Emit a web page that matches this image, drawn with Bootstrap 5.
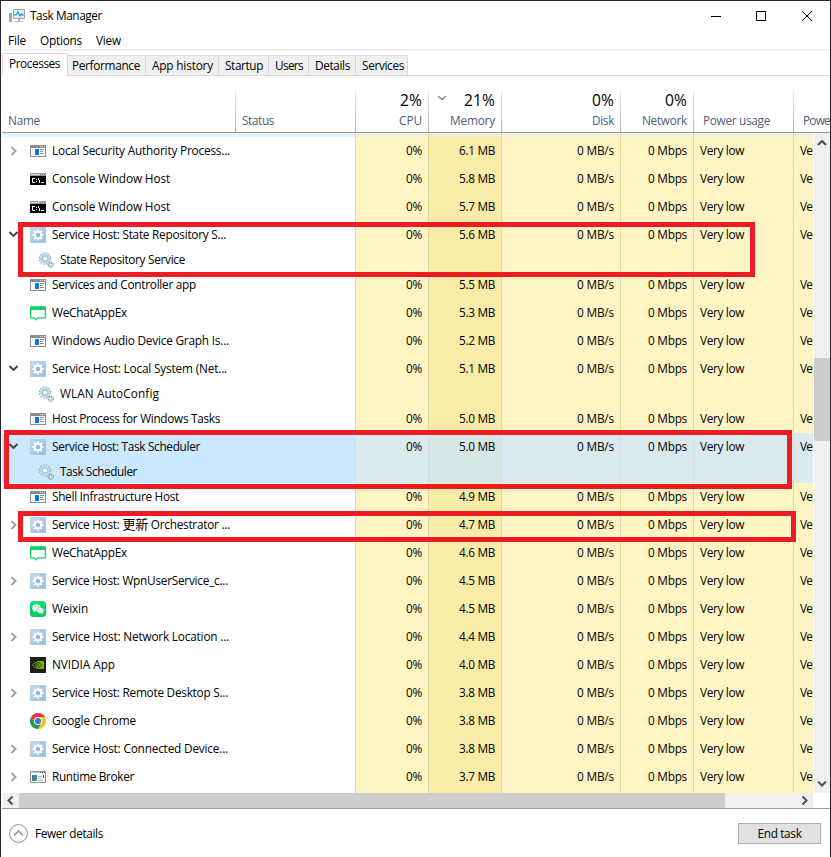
<!DOCTYPE html>
<html lang="en">
<head>
<meta charset="utf-8">
<title>Task Manager</title>
<link rel="stylesheet" href="https://cdn.jsdelivr.net/npm/bootstrap@5.3.0/dist/css/bootstrap.min.css">
<style>
html, body { height: 857px; overflow: hidden; }
body { font: 11.8px/16px "Open Sans", "Noto Sans", "Noto Sans CJK SC", sans-serif; color: #000; background: #fff; }
svg { display: block; flex: none; }
.win { width: 831px; height: 857px; border: 1px solid #2b282e; border-bottom: 0; padding-left: 1px; white-space: nowrap; }
.titlebar { height: 29px; }
.titlebar .caption { padding-left: 7px; }
.menus { height: 19px; padding: 1px 0 0 6px; }
.menus span { margin-right: 14px; }
.rule { height: 2px; background: #f0f0f0; }
.tabs { height: 25px; padding-top: 2px; }
.tab-item { height: 21px; border: 1px solid #d9d9d9; border-left: 0; background: #f0f0f0; padding: 1px 0 0 6px; }
.tab-item.snug { padding-left: 4px; }
.tab-item.tab-on { height: 23px; background: #fff; border-left: 1px solid #d9d9d9; border-bottom: 0; padding: 1px 0 0 6px; width: 66px; }
.tab-rest { height: 1px; background: #d9d9d9; }
.heads { height: 57px; padding-top: 15px; border-bottom: 1px solid #999; color: #4c607a; }
.hd { height: 41px; flex: none; border-left: 1px solid; border-image: linear-gradient(#e8e8e8, #b4b4b4) 1; position: relative; padding: 1px 0 0 6px; }
.hd.num { text-align: right; padding: 1px 6px 0 0; }
.hd.wide { padding-left: 9px; }
.hd-first { border: 0; }
.pct { font-size: 15.6px; line-height: 16px; height: 20px; color: #000; }
.sortmark { position: absolute; left: 8px; top: 4px; }
.listing { height: 660px; }
.sheet { width: 811px; height: 660px; overflow: hidden; }
.grp { display: grid; grid-template-columns: 353px 73px 73px 119px 73px 100px 20px; height: 28px; }
.grp.has-kid { height: 50px; }
.grp.peek { height: 4px; }
.grp.tail { height: 2px; }
.val { background: #fff4c4; border-left: 1px solid #e9d7a1; text-align: right; padding: 5px 6px 0 0; }
.val.mem { background: #f9eca8; }
.val.txt { text-align: left; padding-left: 6px; padding-right: 0; }
.peek .nm { background: #e5f3ff; }
.peek .val, .tail .val { padding: 0; }
.peek .val { background: #edf2df; }
.peek .mem { background: #eaefd4; }
.sel .nm { background: #cce8ff; }
.sel .val { background: #d9ebee; border-color: #d2e2e4; }
.sel .mem { background: #d6e8e6; }
.main-line { height: 28px; }
.kid-line { height: 22px; padding-left: 36px; gap: 6px; }
.main-line > [data-w], .kid-line > [data-w], .caption > [data-w], .foot > [data-w] { margin-bottom: 2px; }
.twist { width: 28px; padding-left: 5px; }
.icn { width: 22px; }
.vbar { width: 16px; background: #f0f0f0; margin-left: 1px; padding: 6px 0 5px; }
.vgap { height: 211px; }
.vthumb { height: 83px; background: #cdcdcd; }
.hbar { height: 15px; width: 811px; background: #f0f0f0; }
.hthumb { width: 706px; background: #cdcdcd; }
.foot { height: 50px; border-top: 1px solid #999; padding: 0 9px 0 7px; }
.foot .more { margin-left: 7px; }
.endbtn { width: 83px; height: 21px; border: 1px solid #adadad; border-radius: 0; background: #e1e1e1; font-size: inherit; line-height: 19px; color: #000; padding: 0; }
.redbox { position: absolute; border: 5px solid #ed1c24; }
.box-a { left: 18px; top: 222px; width: 737px; height: 55px; }
.box-b { left: 4px; top: 430px; width: 788px; height: 59px; }
.box-c { left: 18px; top: 511px; width: 778px; height: 31px; }
.cjk { font-size: 13px; line-height: 1; }
[data-w] { display: inline-block; }
</style>
<script src="https://cdn.jsdelivr.net/npm/bootstrap@5.3.0/dist/js/bootstrap.bundle.min.js"></script>
</head>
<body class="position-relative">
<svg width="0" height="0" class="position-absolute">
  <defs>
    <linearGradient id="gBlue" x1="0" y1="0" x2="1" y2="1"><stop offset="0" stop-color="#c3ddf3"/><stop offset="1" stop-color="#8fb9e0"/></linearGradient>
    <linearGradient id="gGreen" x1="0" y1="0" x2="0" y2="1"><stop offset="0" stop-color="#08e36a"/><stop offset="1" stop-color="#06c75a"/></linearGradient>
    <linearGradient id="gRt" x1="0" y1="0" x2="1" y2="1"><stop offset="0" stop-color="#2f6fb8"/><stop offset="1" stop-color="#4ba36a"/></linearGradient>
    <symbol id="i-app" viewBox="0 0 16 16"><path fill="#888d92" d="M0 2h16v12H0z"/><path fill="#fff" d="M1 5h14v8H1z"/><path fill="#dfe3e6" d="M10 3h1v1h-1zM12 3h1v1h-1zM14 3h1v1h-1z"/><path fill="#0a77d5" d="M5 6h4v6H5z"/><path fill="#8a8f94" d="M10 6h4v1h-4zM10 8h3v1h-3zM10 10h4v1h-4z"/><path fill="#f0f1f2" d="M2 6h2v6H2z"/></symbol>
    <symbol id="i-con" viewBox="0 0 16 16"><path fill="#9ba0a5" d="M0 2h16v12H0z"/><path fill="#d5dadd" d="M1 3h14v1H1z"/><path fill="#666" d="M10 3h1v1h-1zM12 3h1v1h-1zM14 3h1v1h-1z"/><path d="M0 5h16v9H0z"/><path fill="#fff" d="M2 7h3v1H3v3h2v1H2.500L2 11zM6 8h1v1H6zM6 10h1v1H6zM8 7h1v2H8zM9 9h1v3H9zM11 11h3v1h-3z"/></symbol>
    <symbol id="i-svc" viewBox="0 0 16 16"><path fill="url(#gBlue)" stroke="#9cbfdd" stroke-width=".6" d="M.3.3h15.400v15.400H.3z"/><g stroke="#fff" stroke-width="2.100"><path d="M8 2.500v11M2.500 8h11M4.100 4.100l7.800 7.800M11.900 4.100l-7.800 7.800"/></g><circle cx="8" cy="8" r="4.200" fill="#fff"/><circle cx="8" cy="8" r="2.200" fill="#8fb8e0"/></symbol>
    <symbol id="i-gear" viewBox="0 0 16 16"><circle cx="7" cy="6.500" r="5.700" fill="none" stroke="#9cb5c5" stroke-width="1.300" stroke-dasharray="1.700 1.280"/><circle cx="7" cy="6.500" r="4" fill="#fff" stroke="#b9d6e8" stroke-width="2.200"/><circle cx="7" cy="6.500" r="2.600" fill="#fff" stroke="#7d9eb4" stroke-width=".8"/><circle cx="12.700" cy="12.700" r="2.600" fill="none" stroke="#7c929f" stroke-width="1.200" stroke-dasharray="1.100 .94"/><circle cx="12.700" cy="12.700" r="1.500" fill="#fff" stroke="#8fb0c4"/></symbol>
    <symbol id="i-wcx" viewBox="0 0 16 16"><path fill="#fff" stroke="#0bd868" stroke-width="1.300" d="M.7 2.200h14.600v10.600H8L6 14.700l-1.500-1.900H.7z"/><path fill="#0bd868" d="M0 1.500h16V5H0z"/><path fill="#08a850" d="M10 3h1v1h-1zM12 3h1v1h-1zM14 3h1v1h-1z"/></symbol>
    <symbol id="i-wx" viewBox="0 0 16 16"><rect width="16" height="16" rx="3.500" fill="url(#gGreen)"/><ellipse cx="6.500" cy="6.700" rx="4.200" ry="3.500" fill="#fff"/><path fill="#fff" d="M3.500 9v2.300L6 10z"/><ellipse cx="10.300" cy="9.500" rx="3.600" ry="3" fill="#fff" stroke="#08d662" stroke-width=".6"/><path fill="#fff" d="M11 12l2 1v-2z"/><g fill="#08d662"><circle cx="5.100" cy="5.700" r=".6"/><circle cx="8" cy="5.700" r=".6"/><circle cx="9.200" cy="8.700" r=".5"/><circle cx="11.600" cy="8.700" r=".5"/></g></symbol>
    <symbol id="i-nv" viewBox="0 0 16 16"><path fill="#201f20" d="M0 0h16v16H0z"/><path fill="#76b900" d="M7 4h7v8H7z"/><path fill="none" stroke="#76b900" stroke-width="1" d="M7 5.300C4.500 5.300 2.500 8 2.500 8S4.400 11.200 7.500 11.200M7.300 7c-1.300 0-2 1-2 1s.8 1.600 2.500 1.600"/><path fill="none" stroke="#201f20" stroke-width=".9" d="M7 5.300c2.800 0 4.500 2.600 4.500 2.600S9.800 11 7.500 11M7 7c1.500 0 2.200 1 2.200 1S8.500 9.300 7.500 9.500"/></symbol>
    <symbol id="i-chr" viewBox="0 0 16 16"><path fill="#e33b2e" d="M8 8L1.070 4A8 8 0 0 1 14.930 4z"/><path fill="#fbc116" d="M8 8V4h6.930A8 8 0 0 1 8 16l3.460-6z"/><path fill="#279847" d="M8 16A8 8 0 0 1 1.070 4l3.470 6L8 12l3.460-2z"/><path fill="#e33b2e" d="M1.070 4L4.540 10 8 8V4z"/><circle cx="8" cy="8" r="4" fill="#fff"/><circle cx="8" cy="8" r="3.100" fill="#2b7de9"/></symbol>
    <symbol id="i-rt" viewBox="0 0 16 16"><path fill="#fff" stroke="#8c9297" d="M.5 2.500h15v11H.5z"/><path fill="#b9d0e0" d="M1 3h14v1H1z"/><path fill="#56616a" d="M10 3h1v1h-1zM12 3h1v1h-1zM14 3h1v1h-1zM13 6h1v3h-1z"/><path fill="url(#gRt)" d="M2 6h5v6H2z"/><path fill="#b5b8bb" d="M8 7h4v1H8zM8 9h4v1H8zM8 11h5v1H8z"/></symbol>
    <symbol id="c-right" viewBox="0 0 12 12"><path fill="none" stroke="#a0a0a0" stroke-width="1.900" d="M4.500 2l4 4-4 4"/></symbol>
    <symbol id="c-down" viewBox="0 0 12 12"><path fill="none" stroke="#404040" stroke-width="1.900" d="M2.500 3l4 4 4-4"/></symbol>
  </defs>
</svg>
<main class="win">
  <header class="titlebar d-flex align-items-center">
    <div class="caption d-flex align-items-center flex-grow-1">
      <svg width="17" height="16" viewBox="0 0 17 16" class="me-1"><path fill="#a5a9ad" d="M0 5h3v9H0z"/><path fill="#32b54a" d="M1 6h1v1H1z"/><path fill="#d6eefb" stroke="#9b9fa3" d="M4.500 1.500h11v9h-11z"/><path fill="none" stroke="#1b86bd" stroke-width="1.100" d="M5 7h2l2-3 2 4 1.500-2 1 1H15"/><path fill="#b6babd" d="M9 11h2v2h3v1H6v-1h3z"/></svg>
      <span data-w="72">Task Manager</span>
    </div>
    <svg width="119" height="12" viewBox="0 0 119 12" fill="none" stroke="#000"><path d="M0 6.500h10M45.500 1.500h9v9h-9zM91 1l10 10M101 1l-10 10"/></svg>
  </header>
  <nav class="menus d-flex align-items-center"><span data-w="18">File</span><span data-w="42">Options</span><span data-w="25">View</span></nav>
  <div class="rule"></div>
  <div class="tabs d-flex align-items-end">
    <div class="tab-item tab-on"><span data-w="51">Processes</span></div>
    <div class="tab-item snug" data-cell="78"><span data-w="68">Performance</span></div>
    <div class="tab-item" data-cell="73"><span data-w="61">App history</span></div>
    <div class="tab-item" data-cell="50"><span data-w="38">Startup</span></div>
    <div class="tab-item" data-cell="40"><span data-w="28">Users</span></div>
    <div class="tab-item" data-cell="47"><span data-w="35">Details</span></div>
    <div class="tab-item" data-cell="52"><span data-w="42">Services</span></div>
    <div class="tab-rest flex-grow-1"></div>
  </div>
  <div class="heads d-flex overflow-hidden">
    <div class="hd hd-first" data-cell="233"><div class="pct"></div><span data-w="32">Name</span></div>
    <div class="hd" data-cell="120"><div class="pct"></div><span data-w="32">Status</span></div>
    <div class="hd num" data-cell="73"><div class="pct"><span data-w="22">2%</span></div><span data-w="23">CPU</span></div>
    <div class="hd num" data-cell="73"><svg class="sortmark" width="10" height="6" viewBox="0 0 10 6"><path d="M1 1l4 3.500L9 1" fill="none" stroke="#74869b" stroke-width="1.400"/></svg><div class="pct"><span data-w="31">21%</span></div><span data-w="45">Memory</span></div>
    <div class="hd num" data-cell="119"><div class="pct"><span data-w="22">0%</span></div><span data-w="22">Disk</span></div>
    <div class="hd num" data-cell="73"><div class="pct"><span data-w="22">0%</span></div><span data-w="45">Network</span></div>
    <div class="hd wide" data-cell="100"><div class="pct"></div><span data-w="67">Power usage</span></div>
    <div class="hd wide" data-cell="37"><div class="pct"></div><span data-w="27">Powe</span></div>
  </div>
  <section class="listing d-flex">
    <div class="sheet" id="sheet"></div>
    <div class="vbar d-flex flex-column align-items-center">
      <svg width="10" height="8" viewBox="0 0 10 8"><path d="M1 6l4-4 4 4" fill="none" stroke="#505050" stroke-width="2"/></svg>
      <div class="vgap"></div>
      <div class="vthumb w-100"></div>
      <svg class="mt-auto" width="10" height="8" viewBox="0 0 10 8"><path d="M1 1.500l4 4 4-4" fill="none" stroke="#505050" stroke-width="2"/></svg>
    </div>
  </section>
  <div class="hbar d-flex align-items-stretch">
    <svg width="17" height="15" viewBox="0 0 17 15"><path d="M10.500 3.500l-4 4 4 4" fill="none" stroke="#505050" stroke-width="2"/></svg>
    <div class="hthumb"></div>
    <svg class="ms-auto" width="17" height="15" viewBox="0 0 17 15"><path d="M6.500 3.500l4 4-4 4" fill="none" stroke="#505050" stroke-width="2"/></svg>
  </div>
  <footer class="foot d-flex align-items-center">
    <svg width="19" height="19" viewBox="0 0 19 19" fill="none" stroke="#8b8b8b"><circle cx="9.500" cy="9.500" r="8.900"/><path d="M5 11.500l4.500-4.500 4.500 4.500" stroke-width="1.300"/></svg>
    <span class="more" data-w="68">Fewer details</span>
    <button class="btn endbtn ms-auto"><span data-w="44">End task</span></button>
  </footer>
</main>
<div class="redbox box-a"></div>
<div class="redbox box-b"></div>
<div class="redbox box-c"></div>
<script>
// twisty (r, d or blank), icon, name, name width, memory, [child name, child width], selected
const rows = [
  ['r','app','Local Security Authority Process...',178,'6.1'],
  ['','con','Console Window Host',118,'5.8'],
  ['','con','Console Window Host',118,'5.7'],
  ['d','svc','Service Host: State Repository S...',174,'5.6',['State Repository Service',125]],
  ['','app','Services and Controller app',144,'5.5'],
  ['','wcx','WeChatAppEx',75,'5.3'],
  ['','app','Windows Audio Device Graph Is...',177,'5.2'],
  ['d','svc','Service Host: Local System (Net...',175,'5.1',['WLAN AutoConfig',99]],
  ['','app','Host Process for Windows Tasks',168,'5.0'],
  ['d','svc','Service Host: Task Scheduler',148,'5.0',['Task Scheduler',77],true],
  ['','app','Shell Infrastructure Host',127,'4.9'],
  ['r','svc','Service Host: <span class="cjk">更新</span> Orchestrator ...',178,'4.7'],
  ['','wcx','WeChatAppEx',75,'4.6'],
  ['r','svc','Service Host: WpnUserService_c...',176,'4.5'],
  ['','wx','Weixin',36,'4.5'],
  ['r','svc','Service Host: Network Location ...',177,'4.4'],
  ['','nv','NVIDIA App',63,'4.0'],
  ['r','svc','Service Host: Remote Desktop S...',176,'3.8'],
  ['','chr','Google Chrome',84,'3.8'],
  ['r','svc','Service Host: Connected Device...',176,'3.8'],
  ['r','rt','Runtime Broker',82,'3.7']
];
const use = (id, s) => `<svg width="${s}" height="${s}"><use href="#${id}"/></svg>`;
const t = (s, w) => `<span data-w="${w}">${s}</span>`;
const blank = c => `<div class="grp ${c}"><div class="nm"></div><div class="val"></div><div class="val mem"></div>${'<div class="val"></div>'.repeat(4)}</div>`;
document.getElementById('sheet').innerHTML = blank('peek') + rows.map(([tw, ic, name, w, mem, kid, sel]) => `
<div class="grp ${kid ? 'has-kid' : ''} ${sel ? 'sel' : ''}">
<div class="nm"><div class="main-line d-flex align-items-center"><div class="twist">${tw ? use(tw === 'r' ? 'c-right' : 'c-down', 12) : ''}</div><div class="icn">${use('i-' + ic, 16)}</div>${t(name, w)}</div>
${kid ? `<div class="kid-line d-flex align-items-center">${use('i-gear', 16)}${t(kid[0], kid[1])}</div>` : ''}</div>
<div class="val">${t('0%', 16)}</div><div class="val mem">${t(mem + ' MB', 36)}</div><div class="val">${t('0 MB/s', 37)}</div><div class="val">${t('0 Mbps', 39)}</div><div class="val txt">${t('Very low', 44)}</div><div class="val txt">${t('Ve', 12)}</div></div>`).join('') + blank('tail');
document.querySelectorAll('[data-cell]').forEach(e => { e.style.width = e.dataset.cell + 'px'; });
document.querySelectorAll('[data-w]').forEach(e => {
  const n = e.textContent.length, now = e.getBoundingClientRect().width;
  e.style.letterSpacing = ((+e.dataset.w - now) / n).toFixed(3) + 'px';
});
</script>
</body>
</html>
